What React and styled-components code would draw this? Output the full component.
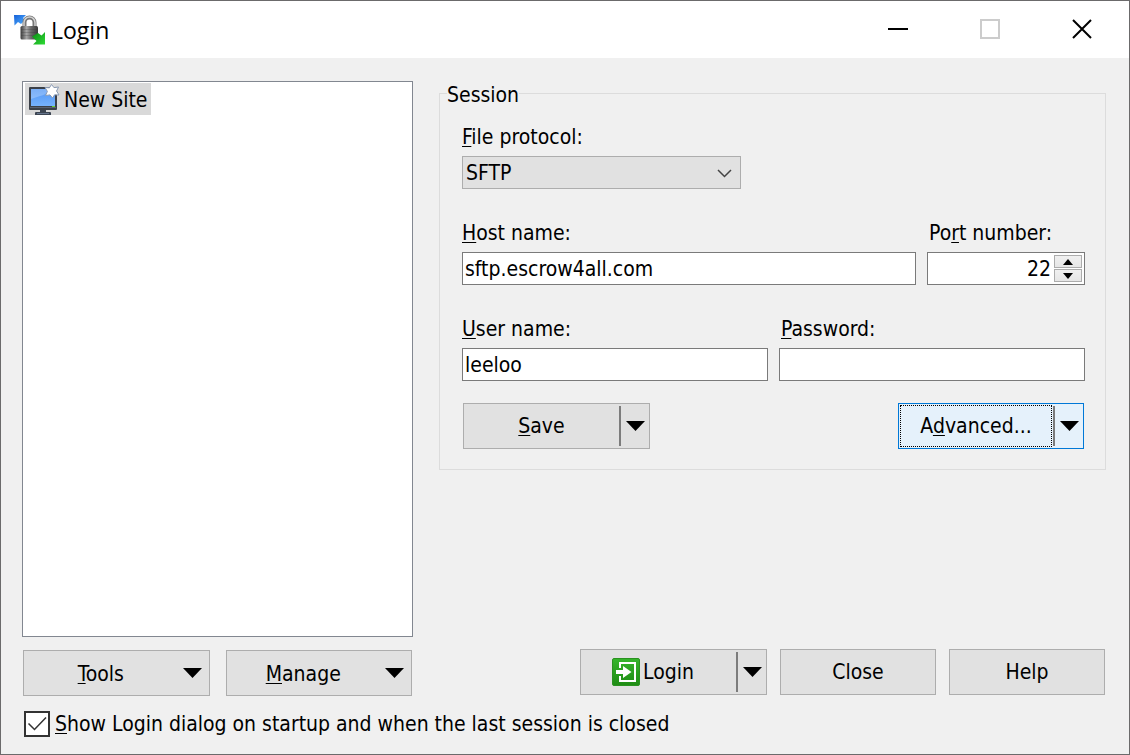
import React, { useState } from "react";
import styled, { createGlobalStyle, css } from "styled-components";

const GlobalStyle = createGlobalStyle`
  *, *::before, *::after { box-sizing: border-box; }
  body {
    margin: 0;
    background: #f0f0f0;
    color: #000;
    font-family: "DejaVu Sans Condensed", Tahoma, "Noto Sans", sans-serif;
    font-size: 21px;
    line-height: 28px;
  }
  button, input, select {
    font: inherit;
    color: inherit;
    margin: 0;
    border-radius: 0;
  }
  u {
    text-decoration-thickness: 1px;
    text-underline-offset: 2px;
    text-decoration-skip-ink: none;
  }
`;

const Dialog = styled.div`
  display: flex;
  flex-direction: column;
  min-height: 100vh;
  border: 1px solid #6b6a6b;
  background: #f0f0f0;
`;

const TitleBar = styled.header`
  display: flex;
  align-items: stretch;
  height: 57px;
  padding: 0 1px 0 13px;
  background: #fff;
`;

const Title = styled.h1`
  display: flex;
  align-items: center;
  gap: 5px;
  flex: 1;
  margin: 0;
  font-family: "Open Sans", "Segoe UI", sans-serif;
  font-size: 23px;
  font-weight: 400;
`;

const WindowButton = styled.button`
  display: grid;
  place-items: center;
  width: 92px;
  padding: 0 0 2px;
  border: 0;
  background: transparent;
`;

const Main = styled.main`
  flex: 1;
  display: grid;
  grid-template-columns: minmax(0, 391fr) minmax(0, 667fr);
  column-gap: 26px;
  padding: 23px 23px 0 21px;
`;

const Column = styled.div`
  display: flex;
  flex-direction: column;
`;

const SiteList = styled.ul`
  flex: 1;
  margin: 0 0 13px;
  padding: 1px 2px;
  list-style: none;
  border: 1px solid #828790;
  background: #fff;
`;

const SiteItem = styled.li`
  display: flex;
  align-items: center;
  gap: 4px;
  width: fit-content;
  height: 32px;
  padding: 1px 3px 0;
  background: #d9d9d9;
`;

const ButtonRow = styled.div`
  display: flex;
  gap: ${(p) => p.$gap}px;
  justify-content: ${(p) => p.$justify || "flex-start"};
  padding: 0 1px;
`;

const face = css`
  height: 46px;
  border: 1px solid #adadad;
  background: #e1e1e1;
`;

const PushButton = styled.button`
  ${face}
  width: 156px;
  padding: 0;
`;

const MenuButton = styled.button`
  ${face}
  display: flex;
  align-items: center;
  flex: 1;
  padding: 0 7px 0 0;

  span {
    flex: 1;
    padding: 1px 5px 0 0;
  }
`;

const Split = styled.div`
  ${face}
  display: flex;
  align-items: center;
  width: 187px;
  ${(p) =>
    p.$active &&
    css`
      width: 186px;
      border-color: #0078d7;
      background: #e5f1fb;
    `}
`;

const SplitMain = styled.button`
  display: flex;
  align-items: center;
  justify-content: center;
  gap: 3px;
  flex: 1;
  align-self: stretch;
  margin: 1px;
  padding: 0 ${(p) => (p.$icon ? 11 : 0)}px 0 0;
  border: 1px ${(p) => (p.$active ? "dotted #000" : "solid transparent")};
  background: transparent;
`;

const SplitArrow = styled.button`
  display: grid;
  place-items: center;
  width: 30px;
  height: 40px;
  padding: 0;
  border: 0;
  border-left: 2px solid #7c7c7c;
  background: transparent;
`;

const SessionBox = styled.fieldset`
  min-width: 0;
  margin: 0;
  padding: 0 7px;
  border: 1px solid #dcdcdc;
`;

const Legend = styled.legend`
  padding: 3px 0 0;
  line-height: 22px;
`;

const SessionForm = styled.div`
  padding: 17px 13px 20px 15px;
`;

const FieldRow = styled.div`
  display: grid;
  grid-template-columns: ${(p) => p.$columns};
  column-gap: 11px;
  margin-bottom: ${(p) => (p.$last ? 22 : 30)}px;
`;

const Field = styled.div`
  display: flex;
  flex-direction: column;
  gap: 5px;
  min-width: 0;

  & + & > label { padding-left: 2px; }
`;

const TextBox = styled.input`
  width: 100%;
  height: 33px;
  padding: 0 2px;
  border: 1px solid #7a7a7a;
  background: #fff;
  outline: none;
`;

const SelectWrap = styled.div`
  position: relative;

  select {
    appearance: none;
    display: block;
    width: 100%;
    height: 33px;
    padding: 0 30px 0 3px;
    border: 1px solid #adadad;
    background: #e1e1e1;
    outline: none;
  }

  svg {
    position: absolute;
    right: 9px;
    top: 13px;
    pointer-events: none;
  }
`;

const SpinBox = styled.div`
  display: flex;
  height: 33px;
  padding: 2px;
  border: 1px solid #7a7a7a;
  background: #fff;

  input {
    flex: 1;
    min-width: 0;
    padding: 0 3px 0 0;
    border: 0;
    text-align: right;
    background: transparent;
    outline: none;
  }
`;

const SpinButtons = styled.div`
  display: grid;
  grid-template-rows: 1fr 1fr;
  gap: 1px;
  width: 28px;

  button {
    display: grid;
    place-items: center;
    padding: 0;
    border: 1px solid #acacac;
    background: linear-gradient(#f0f0f0, #e6e6e6);
  }
`;

const RightFooter = styled.div`
  margin-top: auto;
  padding-bottom: 1px;
`;

const StartupRow = styled.label`
  display: flex;
  align-items: center;
  gap: 5px;
  height: 26px;
  margin: 15px 23px 17px;
`;

const CheckWrap = styled.span`
  position: relative;
  width: 26px;
  height: 26px;

  input {
    appearance: none;
    display: block;
    width: 26px;
    height: 26px;
    border: 2px solid #333;
    background: #fff;
  }

  svg {
    position: absolute;
    inset: 0;
    pointer-events: none;
  }
`;

const DownArrow = () => (
  <svg width="19" height="10" viewBox="0 0 19 10" aria-hidden="true">
    <path d="M0 0H19L9.5 10Z" />
  </svg>
);

const AppIcon = () => (
  <svg width="32" height="32" viewBox="0 0 32 32" aria-hidden="true">
    <defs>
      <linearGradient id="lockBody" x1="0" x2="1" y1="0" y2="0">
        <stop offset="0" stopColor="#3c3c3c" />
        <stop offset="0.35" stopColor="#a8a8a8" />
        <stop offset="0.6" stopColor="#6a6a6a" />
        <stop offset="1" stopColor="#3a3a3a" />
      </linearGradient>
      <linearGradient id="blueArrow" x1="0" x2="1" y1="0" y2="1">
        <stop offset="0" stopColor="#1560d8" />
        <stop offset="1" stopColor="#55b4ff" />
      </linearGradient>
      <linearGradient id="greenArrow" x1="0" x2="1" y1="0" y2="1">
        <stop offset="0" stopColor="#0a8a14" />
        <stop offset="1" stopColor="#2fdc35" />
      </linearGradient>
    </defs>
    <path d="M0 1H12L9 4L11 6L7 10L4 8L0.500 11.500Z" fill="url(#blueArrow)" />
    <path d="M10.500 13V8.500a5 5 0 0 1 10 0V13" fill="none" stroke="#777" strokeWidth="4" />
    <path d="M10 13V8.500a5.500 5.500 0 0 1 11 0V13" fill="none" stroke="#d0d0d0" strokeWidth="1.500" />
    <rect x="6.500" y="12" width="17.500" height="13.500" rx="1.500" fill="url(#lockBody)" />
    <path d="M7 15.500H23.500M7 18.500H23.500M7 21.500H23.500" stroke="#333" strokeOpacity="0.25" />
    <path d="M31 18V30.500H19L22.500 27L18 22.500L24 19L27.500 21.500Z" fill="url(#greenArrow)" />
  </svg>
);

const SiteIcon = () => (
  <svg width="32" height="32" viewBox="0 0 32 32" aria-hidden="true">
    <defs>
      <linearGradient id="screen" x1="0" x2="0" y1="0" y2="1">
        <stop offset="0" stopColor="#4f95f5" />
        <stop offset="1" stopColor="#76b2fd" />
      </linearGradient>
    </defs>
    <rect x="1" y="3" width="28" height="23" rx="1" fill="#3b4048" />
    <rect x="3" y="5" width="24" height="17" fill="url(#screen)" />
    <path d="M3 5H23C20 11 11 12 3 15Z" fill="#fff" fillOpacity="0.25" />
    <path d="M2 23.500H28" stroke="#596273" />
    <rect x="24" y="22" width="3" height="1" fill="#67d329" />
    <path d="M12 26H18V28H22Q23 28 23 29V31H7V29Q7 28 8 28H12Z" fill="#3c4552" />
    <path d="M9 29.500H21" stroke="#65758d" />
    <path
      d="M23.500 0.500L26 3.600L30.500 3L28.600 7L31 11L26.600 10.800L24.500 14L22 10.900L17.500 11.500L19.400 7.400L17 3.500L21.400 3.800Z"
      fill="#fff"
      stroke="#8a9bb5"
      strokeWidth="1"
    />
  </svg>
);

const LoginIcon = () => (
  <svg width="28" height="28" viewBox="0 0 28 28" aria-hidden="true">
    <defs>
      <linearGradient id="loginGreen" x1="0" x2="0" y1="0" y2="1">
        <stop offset="0" stopColor="#35b52b" />
        <stop offset="1" stopColor="#1f8c14" />
      </linearGradient>
    </defs>
    <rect x="0.500" y="0.500" width="27" height="27" rx="1.500" fill="url(#loginGreen)" stroke="#2a9220" />
    <path d="M8 10V5H23V23H8V18" fill="none" stroke="#fff" strokeWidth="2" />
    <path d="M4 12H11V8L19.500 14L11 20V16H4Z" fill="#fff" />
  </svg>
);

function SplitButton({ active, icon, menuLabel, children }) {
  return (
    <Split $active={active}>
      <SplitMain type="button" $active={active} $icon={Boolean(icon)}>
        {icon}
        <span>{children}</span>
      </SplitMain>
      <SplitArrow type="button" aria-label={menuLabel}>
        <DownArrow />
      </SplitArrow>
    </Split>
  );
}

export default function App() {
  const [port, setPort] = useState(22);

  return (
    <>
      <GlobalStyle />
      <Dialog>
        <TitleBar>
          <Title>
            <AppIcon />
            Login
          </Title>
          <WindowButton type="button" aria-label="Minimize">
            <svg width="20" height="20">
              <path d="M0 10H20" stroke="#000" strokeWidth="2" />
            </svg>
          </WindowButton>
          <WindowButton type="button" aria-label="Maximize" disabled>
            <svg width="20" height="20">
              <rect x="1" y="1" width="18" height="18" fill="none" stroke="#ccc" strokeWidth="2" />
            </svg>
          </WindowButton>
          <WindowButton type="button" aria-label="Close window">
            <svg width="20" height="20">
              <path d="M1 1L19 19M19 1L1 19" stroke="#000" strokeWidth="2" />
            </svg>
          </WindowButton>
        </TitleBar>

        <Main>
          <Column>
            <SiteList aria-label="Sites">
              <SiteItem>
                <SiteIcon />
                New Site
              </SiteItem>
            </SiteList>
            <ButtonRow $gap={16}>
              <MenuButton type="button">
                <span><u>T</u>ools</span>
                <DownArrow />
              </MenuButton>
              <MenuButton type="button">
                <span><u>M</u>anage</span>
                <DownArrow />
              </MenuButton>
            </ButtonRow>
          </Column>

          <Column>
            <SessionBox>
              <Legend>Session</Legend>
              <SessionForm>
                <FieldRow $columns="279px">
                  <Field>
                    <label htmlFor="protocol"><u>F</u>ile protocol:</label>
                    <SelectWrap>
                      <select id="protocol" defaultValue="SFTP">
                        <option>SFTP</option>
                        <option>SCP</option>
                        <option>FTP</option>
                      </select>
                      <svg width="15" height="9" viewBox="0 0 15 9" aria-hidden="true">
                        <path d="M1 1L7.500 7.500L14 1" fill="none" stroke="#444" strokeWidth="1.500" />
                      </svg>
                    </SelectWrap>
                  </Field>
                </FieldRow>
                <FieldRow $columns="minmax(0, 1fr) 158px">
                  <Field>
                    <label htmlFor="host"><u>H</u>ost name:</label>
                    <TextBox id="host" type="text" defaultValue="sftp.escrow4all.com" />
                  </Field>
                  <Field>
                    <label htmlFor="port">Po<u>r</u>t number:</label>
                    <SpinBox>
                      <input
                        id="port"
                        type="text"
                        inputMode="numeric"
                        value={port}
                        onChange={(e) => setPort(Number(e.target.value) || 0)}
                      />
                      <SpinButtons>
                        <button type="button" aria-label="Increase port" onClick={() => setPort(port + 1)}>
                          <svg width="10" height="6" viewBox="0 0 10 6"><path d="M0 6L5 0L10 6Z" /></svg>
                        </button>
                        <button type="button" aria-label="Decrease port" onClick={() => setPort(port - 1)}>
                          <svg width="10" height="6" viewBox="0 0 10 6"><path d="M0 0H10L5 6Z" /></svg>
                        </button>
                      </SpinButtons>
                    </SpinBox>
                  </Field>
                </FieldRow>
                <FieldRow $columns="minmax(0, 1fr) minmax(0, 1fr)" $last>
                  <Field>
                    <label htmlFor="user"><u>U</u>ser name:</label>
                    <TextBox id="user" type="text" defaultValue="leeloo" />
                  </Field>
                  <Field>
                    <label htmlFor="password"><u>P</u>assword:</label>
                    <TextBox id="password" type="password" />
                  </Field>
                </FieldRow>
                <ButtonRow $gap={13} $justify="space-between">
                  <SplitButton menuLabel="Save options"><u>S</u>ave</SplitButton>
                  <SplitButton active menuLabel="Advanced options">A<u>d</u>vanced...</SplitButton>
                </ButtonRow>
              </SessionForm>
            </SessionBox>
            <RightFooter>
              <ButtonRow $gap={13} $justify="flex-end">
                <SplitButton icon={<LoginIcon />} menuLabel="Login options">Login</SplitButton>
                <PushButton type="button">Close</PushButton>
                <PushButton type="button">Help</PushButton>
              </ButtonRow>
            </RightFooter>
          </Column>
        </Main>

        <StartupRow>
          <CheckWrap>
            <input type="checkbox" defaultChecked />
            <svg width="26" height="26" viewBox="0 0 26 26" aria-hidden="true">
              <path d="M4.500 12.500L10.500 18.500L22 6.500" fill="none" stroke="#333" strokeWidth="1.500" />
            </svg>
          </CheckWrap>
          <span><u>S</u>how Login dialog on startup and when the last session is closed</span>
        </StartupRow>
      </Dialog>
    </>
  );
}
